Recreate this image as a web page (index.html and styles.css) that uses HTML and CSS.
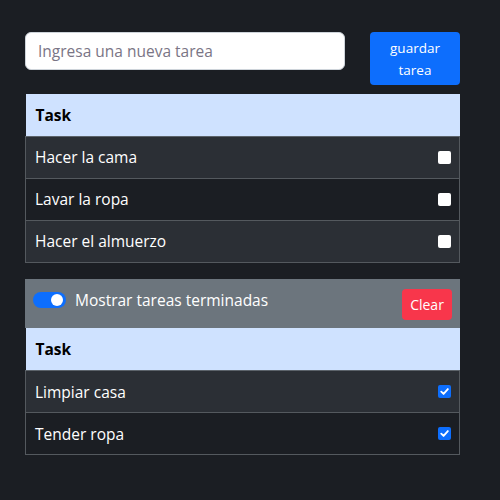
FILE: index.html
```html
<!DOCTYPE html>
<html lang="es">
<head>
<meta charset="utf-8">
<link rel="stylesheet" href="styles.css">
</head>
<body>
<main class="app">
  <form class="add-form">
    <input class="task-input" type="text" placeholder="Ingresa una nueva tarea">
    <button class="btn-save" type="button">guardar<br>tarea</button>
  </form>

  <table class="task-table">
    <thead><tr><th>Task</th></tr></thead>
    <tbody>
      <tr><td><div class="cell"><span>Hacer la cama</span><span class="check"></span></div></td></tr>
      <tr><td><div class="cell"><span>Lavar la ropa</span><span class="check"></span></div></td></tr>
      <tr><td><div class="cell"><span>Hacer el almuerzo</span><span class="check"></span></div></td></tr>
    </tbody>
  </table>

  <section class="done-section">
    <div class="done-bar">
      <label class="switch-label"><span class="switch"></span>Mostrar tareas terminadas</label>
      <button class="btn-clear" type="button">Clear</button>
    </div>
    <table class="task-table done-table">
      <thead><tr><th>Task</th></tr></thead>
      <tbody>
        <tr><td><div class="cell"><span>Limpiar casa</span><span class="check checked"><svg viewBox="0 0 14 14" width="13" height="13"><path d="M3.5 7.2 L6 9.6 L10.6 4.4" fill="none" stroke="#fff" stroke-width="2" stroke-linecap="round" stroke-linejoin="round"/></svg></span></div></td></tr>
        <tr><td><div class="cell"><span>Tender ropa</span><span class="check checked"><svg viewBox="0 0 14 14" width="13" height="13"><path d="M3.5 7.2 L6 9.6 L10.6 4.4" fill="none" stroke="#fff" stroke-width="2" stroke-linecap="round" stroke-linejoin="round"/></svg></span></div></td></tr>
      </tbody>
    </table>
  </section>
</main>
</body>
</html>
```
FILE: styles.css
```css
* { box-sizing: border-box; }
html, body { margin: 0; padding: 0; }
body {
  background: #1b1e23;
  font-family: "Open Sans", "Noto Sans", sans-serif;
  color: #fff;
  width: 500px;
  height: 500px;
}
.app {
  padding: 32px 40px 0 25px;
}
.add-form {
  display: flex;
  align-items: flex-start;
  gap: 25px;
  margin: 0 0 9px 0;
}
.task-input {
  width: 320px;
  height: 38px;
  border: 1px solid #ced4da;
  border-radius: 6px;
  padding: 0 12px;
  font-family: inherit;
  font-size: 15.5px;
  color: #212529;
  background: #fff;
}
.task-input::placeholder { color: #7a7585; }
.btn-save {
  width: 90px;
  height: 53px;
  background: #0d6efd;
  color: #fff;
  border: 0;
  border-radius: 4px;
  font-family: inherit;
  font-size: 13.5px;
  line-height: 22px;
  padding: 0;
}
.task-table {
  width: 435px;
  border-collapse: collapse;
}
.task-table th {
  background: #cfe2ff;
  color: #000;
  font-weight: 700;
  text-align: left;
  font-size: 15.5px;
  height: 42px;
  padding: 0 10px;
  border-bottom: 1px solid #5c636a;
}
.done-table th { height: 43px; }
.task-table td {
  height: 42px;
  padding: 0 8px 0 9px;
  border: 1px solid #54595e;
  font-size: 15.5px;
  background: #212529;
}
.task-table tbody tr:nth-child(odd) td { background: #2b2f35; }
.task-table tbody tr:nth-child(even) td { background: #1b1e23; }
.cell {
  display: flex;
  align-items: center;
  justify-content: space-between;
}
.check {
  width: 13px;
  height: 13px;
  background: #fff;
  border-radius: 2px;
  display: flex;
  align-items: center;
  justify-content: center;
}
.check.checked { background: #0d6efd; }
.check svg { display: block; }
.done-section { margin-top: 16px; }
.done-bar {
  width: 435px;
  height: 49px;
  background: #6c757d;
  display: flex;
  align-items: center;
  justify-content: space-between;
  padding: 0 8px;
}
.switch-label {
  display: flex;
  align-items: center;
  gap: 9px;
  font-size: 15.5px;
  margin-top: -7px;
}
.switch {
  width: 33px;
  height: 16px;
  border-radius: 8px;
  background: #0d6efd;
  position: relative;
}
.switch::after {
  content: "";
  position: absolute;
  right: 3px;
  top: 2px;
  width: 12px;
  height: 12px;
  border-radius: 50%;
  background: #fff;
}
.btn-clear {
  width: 50px;
  height: 31px;
  background: #f8364b;
  color: #fff;
  border: 0;
  border-radius: 4px;
  font-family: inherit;
  font-size: 14px;
  padding: 0;
  margin-top: 2px;
}
```
